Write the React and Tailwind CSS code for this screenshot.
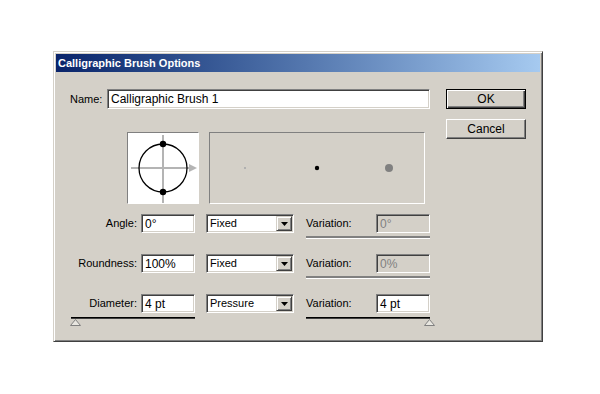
import * as React from "react";

const font = { fontFamily: '"Liberation Sans", Arial, sans-serif' };

function Field({ value, disabled, className = "" }) {
  return (
    <div
      className={`h-[19px] flex items-center pl-[3px] text-[12px] border border-t-[#808080] border-l-[#808080] border-b-white border-r-white shadow-[inset_1px_1px_0_#404040,inset_-1px_-1px_0_#d4d0c8] ${
        disabled ? "bg-[#d4d0c8] text-[#808080]" : "bg-white text-black"
      } ${className}`}
    >
      {value}
    </div>
  );
}

function Select({ value }) {
  return (
    <div className="w-[88px] h-[19px] flex items-center justify-between bg-white border border-t-[#808080] border-l-[#808080] border-b-white border-r-white shadow-[inset_1px_1px_0_#404040,inset_-1px_-1px_0_#d4d0c8] p-[1px]">
      <span className="pl-[2px]">{value}</span>
      <div className="w-[16px] h-full flex items-center justify-center bg-[#d4d0c8] border border-t-[#d4d0c8] border-l-[#d4d0c8] border-b-[#404040] border-r-[#404040] shadow-[inset_1px_1px_0_#fff,inset_-1px_-1px_0_#808080]">
        <svg width="7" height="4" viewBox="0 0 7 4">
          <polygon points="0,0 7,0 3.5,4" fill="#000" />
        </svg>
      </div>
    </div>
  );
}

function Thumb() {
  return (
    <svg width="11" height="7" viewBox="0 0 11 7" className="block">
      <polygon points="5.5,0.5 10.5,6.5 0.5,6.5" fill="#e8e6e0" stroke="#808080" />
    </svg>
  );
}

function Row({ label, value, mode, variation, disabledVar, slider }) {
  return (
    <div className="flex flex-col">
      <div className="flex items-center">
        <div className="w-[85px] pr-[4px] text-right">{label}</div>
        <Field value={value} className="w-[54px]" />
        <div className="ml-[11px]">
          <Select value={mode} />
        </div>
        <div className="ml-[12px] w-[124px] flex items-center">
          <span>Variation:</span>
          <Field value={variation} disabled={disabledVar} className="ml-auto w-[54px]" />
        </div>
      </div>
      <div className={`flex ${slider ? "mt-[4px]" : "mt-[3px]"}`}>
        <div className="ml-[15px] w-[124px] flex flex-col">
          {slider && (
            <>
              <div className="h-[2px] bg-black border-b border-[#404040]" />
              <div className="-ml-[1px]">
                <Thumb />
              </div>
            </>
          )}
        </div>
        <div className="ml-[111px] w-[124px] flex flex-col">
          {slider ? (
            <>
              <div className="h-[2px] bg-black border-b border-[#404040]" />
              <div className="self-end -mr-[5px]">
                <Thumb />
              </div>
            </>
          ) : (
            <>
              <div className="h-[2px] bg-[#808080]" />
              <div className="h-[1px] bg-white" />
            </>
          )}
        </div>
      </div>
    </div>
  );
}

function Button({ children, isDefault }) {
  return (
    <div
      className={`w-[80px] h-[20px] flex items-center justify-center bg-[#d4d0c8] border ${
        isDefault
          ? "border-black shadow-[inset_1px_1px_0_#fff,inset_-1px_-1px_0_#404040,inset_-2px_-2px_0_#808080]"
          : "border-t-white border-l-white border-b-[#404040] border-r-[#404040] shadow-[inset_-1px_-1px_0_#808080]"
      }`}
    >
      {children}
    </div>
  );
}

export default function App() {
  return (
    <div className="w-[600px] h-[394px] bg-white pt-[51px] pl-[53px] text-[11px] text-black" style={font}>
      <div className="w-[490px] h-[291px] bg-[#d4d0c8] p-[2px] border border-t-[#d4d0c8] border-l-[#d4d0c8] border-b-[#404040] border-r-[#404040] shadow-[inset_1px_1px_0_#fff,inset_-1px_-1px_0_#808080] flex flex-col">
        <div className="h-[18px] flex items-center pl-[2px] bg-gradient-to-r from-[#0a246a] to-[#a6caf0] text-white font-bold">
          Calligraphic Brush Options
        </div>
        <div className="flex">
          <div className="w-[390px] flex flex-col">
            <div className="mt-[17px] h-[20px] flex items-center pl-[14px]">
              <div className="w-[37px]">Name:</div>
              <Field value="Calligraphic Brush 1" className="w-[323px] h-[20px]" />
            </div>

            <div className="mt-[23px] pl-[71px] flex gap-[10px]">
              <div className="w-[72px] h-[72px] bg-white border border-t-[#808080] border-l-[#808080] border-b-white border-r-white">
                <svg width="70" height="70" viewBox="0 0 70 70" className="block">
                  <line x1="3" y1="35" x2="62" y2="35" stroke="#b4b4b4" strokeWidth="2" />
                  <polygon points="61,31 69,35 61,39" fill="#b4b4b4" />
                  <line x1="35" y1="2" x2="35" y2="70" stroke="#b4b4b4" strokeWidth="2" />
                  <circle cx="35" cy="35" r="24" fill="none" stroke="#000" strokeWidth="1.3" />
                  <circle cx="35" cy="11" r="3.2" fill="#000" />
                  <circle cx="35" cy="59" r="3.2" fill="#000" />
                </svg>
              </div>
              <div className="w-[216px] h-[72px] border border-t-[#808080] border-l-[#808080] border-b-white border-r-white">
                <svg width="214" height="70" viewBox="0 0 214 70" className="block">
                  <rect x="34" y="34" width="2" height="2" fill="#b0b0b0" />
                  <circle cx="107" cy="35" r="2.2" fill="#000" />
                  <circle cx="179" cy="35" r="4" fill="#808080" />
                </svg>
              </div>
            </div>

            <div className="mt-[10px] flex flex-col gap-[15px]">
              <Row label="Angle:" value="0°" mode="Fixed" variation="0°" disabledVar />
              <Row label="Roundness:" value="100%" mode="Fixed" variation="0%" disabledVar />
              <Row label="Diameter:" value="4 pt" mode="Pressure" variation="4 pt" slider />
            </div>
          </div>

          <div className="flex flex-col pt-[17px] gap-[10px] text-[12px]">
            <Button isDefault>OK</Button>
            <Button>Cancel</Button>
          </div>
        </div>
      </div>
    </div>
  );
}
